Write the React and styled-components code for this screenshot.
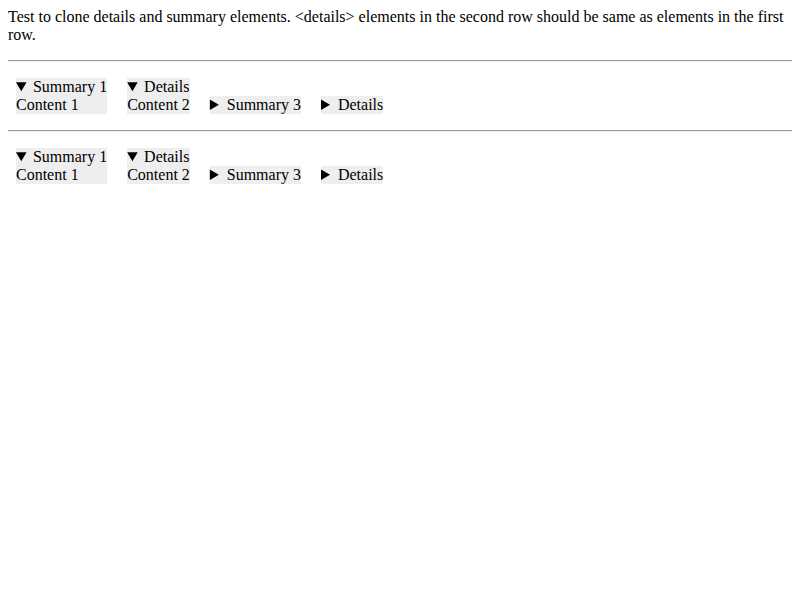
import React from 'react';
import styled, { createGlobalStyle } from 'styled-components';

const GlobalStyle = createGlobalStyle`
  body {
    margin: 8px;
    font-family: "Liberation Serif", serif;
    font-size: 16px;
    color: #000;
    background: #fff;
  }
`;

const Intro = styled.p`
  margin: 0 0 16px;
`;

const Rule = styled.hr`
  margin: 8px 0;
  border: 0;
  border-top: 1px solid #9a9a9a;
  border-bottom: 1px solid #eee;
`;

const Row = styled.div``;

const Box = styled.details`
  display: inline-block;
  margin: 8px;
  background: #eee;

  summary {
    cursor: pointer;
  }
`;

const items = [
  { summary: 'Summary 1', content: 'Content 1', open: true },
  { summary: null, content: 'Content 2', open: true },
  { summary: 'Summary 3', content: 'Content 3', open: false },
  { summary: null, content: 'Content 4', open: false },
];

const DetailsRow = () => (
  <Row>
    {items.map((item, i) => (
      <React.Fragment key={i}>
        <Box open={item.open}>
          {item.summary && <summary>{item.summary}</summary>}
          {item.content}
        </Box>{' '}
      </React.Fragment>
    ))}
  </Row>
);

const App = () => (
  <>
    <GlobalStyle />
    <Intro>
      Test to clone details and summary elements. &lt;details&gt; elements in the second row should be same as elements in the first row.
    </Intro>
    <Rule />
    <DetailsRow />
    <Rule />
    <DetailsRow />
  </>
);

export default App;
